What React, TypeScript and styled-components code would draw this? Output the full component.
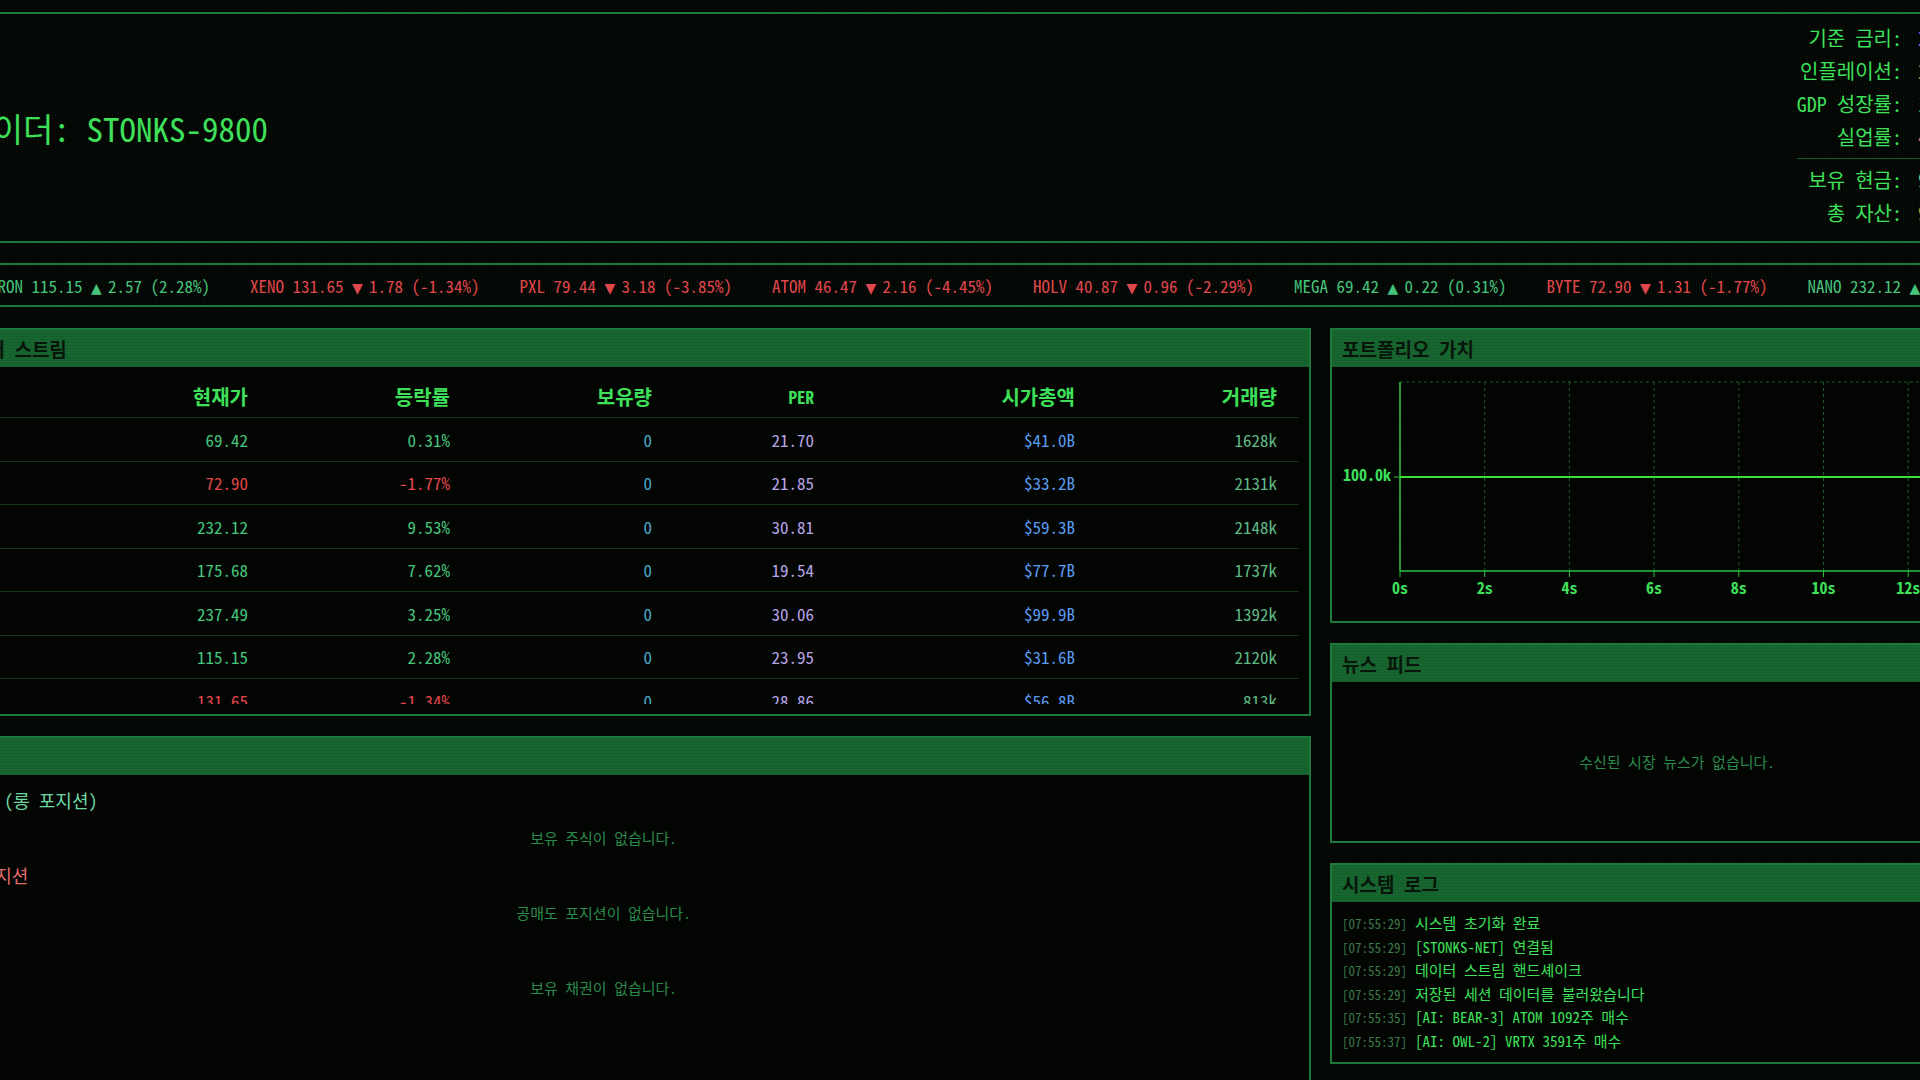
import React from "react";
import styled, { createGlobalStyle } from "styled-components";

const FONT = `"Noto Sans Mono CJK KR", "Noto Sans CJK KR", "DejaVu Sans Mono", monospace`;

const C = {
  bg: "#040604",
  border: "#1d7a3a",
  headerBg: "#17662f",
  bright: "#3ee05a",
  up: "#45c47c",
  down: "#e0474c",
  dim: "#2b8a4c",
  sep: "#0f3519",
};

const GlobalStyle = createGlobalStyle`
  html, body { margin: 0; padding: 0; background: ${C.bg}; overflow: hidden; }
  body { font-family: ${FONT}; color: ${C.bright}; }
  * { box-sizing: border-box; }
`;

const Page = styled.div`
  width: 2128px;
  margin-left: -104px;
  padding-top: 12px;
  display: flex;
  flex-direction: column;
  background-image: repeating-linear-gradient(90deg, rgba(40, 120, 60, 0.05) 0 1px, transparent 1px 3px);
`;

/* ---------- header ---------- */
const TopBar = styled.header`
  height: 231px;
  border: 2px solid ${C.border};
  display: flex;
  align-items: center;
  justify-content: space-between;
  padding: 0 40px 0 34px;
`;

const Title = styled.h1`
  margin: 0;
  font-family: ${FONT};
  font-size: 33px;
  font-weight: 400;
  color: ${C.bright};
`;

const Stats = styled.div`
  display: grid;
  grid-template-columns: auto 64px;
  column-gap: 16px;
  line-height: 33px;
  font-size: 20px;
  margin-bottom: 5px;
`;

const StatLabel = styled.span`
  text-align: right;
  color: ${C.bright};
`;

const StatValue = styled.span<{ $color: string }>`
  color: ${(p) => p.$color};
`;

const StatDivider = styled.div`
  grid-column: 1 / -1;
  height: 1px;
  background: #1d5a2e;
  margin: 5px 0 4px;
`;

/* ---------- ticker ---------- */
const Ticker = styled.div`
  margin-top: 20px;
  height: 44px;
  border-top: 2px solid ${C.border};
  border-bottom: 2px solid ${C.border};
  display: flex;
  align-items: center;
  gap: 40px;
  padding-left: 93px;
  overflow: hidden;
  white-space: nowrap;
  font-size: 17px;
`;

const TickerItem = styled.span<{ $up: boolean }>`
  color: ${(p) => (p.$up ? C.up : C.down)};
`;

const Arrow = styled.span`
  display: inline-block;
  width: 8.5px;
  text-align: center;
  font-family: "DejaVu Sans", sans-serif;
  font-size: 14px;
`;

/* ---------- layout ---------- */
const Main = styled.main`
  margin-top: 21px;
  display: grid;
  grid-template-columns: 1415px 694px;
  column-gap: 19px;
  align-items: start;
`;

const Column = styled.div`
  display: flex;
  flex-direction: column;
  gap: 20px;
`;

const Panel = styled.section<{ $h: number }>`
  height: ${(p) => p.$h}px;
  border: 2px solid ${C.border};
  display: flex;
  flex-direction: column;
  background: #030503;
`;

const PanelHeader = styled.h2`
  margin: 0;
  height: 37px;
  flex: none;
  line-height: 37px;
  padding-left: 10px;
  font-family: ${FONT};
  font-size: 19px;
  font-weight: 700;
  color: #07150b;
  background: ${C.headerBg}
    repeating-linear-gradient(0deg, rgba(0, 0, 0, 0.07) 0 1px, transparent 1px 3px);
`;

const PanelBody = styled.div`
  flex: 1;
  min-height: 0;
  position: relative;
`;

/* ---------- market table ---------- */
const MarketBody = styled(PanelBody)`
  padding: 8px 10px 10px 10px;
`;

const Scroller = styled.div`
  height: 329px;
  overflow-y: scroll;
  &::-webkit-scrollbar {
    width: 17px;
  }
  &::-webkit-scrollbar-track {
    background: #c6c6c6;
  }
  &::-webkit-scrollbar-thumb {
    background: #9a9a9a;
    border: 3px solid #c6c6c6;
    border-radius: 8px;
  }
`;

const COLS = "142px 198px 202px 202px 162px 261px 202px";

const HeadRow = styled.div`
  display: grid;
  grid-template-columns: ${COLS};
  height: 43px;
  align-items: center;
  border-bottom: 1px solid ${C.sep};
  font-size: 20px;
  font-weight: 700;
  color: ${C.bright};
`;

const Row = styled.div`
  display: grid;
  grid-template-columns: ${COLS};
  height: 43.5px;
  align-items: center;
  border-bottom: 1px solid ${C.sep};
  font-size: 17px;
`;

const Cell = styled.span<{ $color?: string; $left?: boolean; $small?: boolean }>`
  text-align: ${(p) => (p.$left ? "left" : "right")};
  color: ${(p) => p.$color || C.bright};
  font-size: ${(p) => (p.$small ? "17px" : "inherit")};
  white-space: nowrap;
`;

/* ---------- holdings ---------- */
const HoldBody = styled(PanelBody)`
  padding: 13px 22px;
  display: flex;
  flex-direction: column;
  gap: 15px;
`;

const HoldSection = styled.div`
  display: flex;
  flex-direction: column;
  gap: 15px;
`;

const HoldLabel = styled.div<{ $color: string }>`
  line-height: 24px;
  font-size: 18px;
  font-weight: 500;
  color: ${(p) => p.$color};
`;

const Empty = styled.div`
  line-height: 21px;
  font-size: 15px;
  text-align: center;
  color: ${C.dim};
`;

/* ---------- news ---------- */
const CenterBody = styled(PanelBody)`
  display: flex;
  align-items: center;
  justify-content: center;
  font-size: 15px;
  color: ${C.dim};
`;

/* ---------- log ---------- */
const LogBody = styled(PanelBody)`
  padding: 9px 10px;
`;

const LogLine = styled.div`
  display: flex;
  align-items: baseline;
  height: 23.5px;
  line-height: 23.5px;
  white-space: nowrap;
`;

const Stamp = styled.span`
  font-size: 13px;
  color: #3c7a4b;
  margin-right: 8px;
`;

const LogMsg = styled.span`
  font-size: 15px;
  color: ${C.bright};
`;

/* ---------- chart ---------- */
const ChartSvg = styled.svg`
  display: block;
  font-family: ${FONT};
`;

const PortfolioChart = () => {
  const x0 = 68;
  const step = 84.7;
  const top = 15;
  const bottom = 204;
  const ticks = Array.from({ length: 8 }, (_, i) => i);
  const xEnd = x0 + step * 7;
  return (
    <ChartSvg width="690" height="254" viewBox="0 0 690 254">
      <line x1={x0} y1={top} x2={xEnd} y2={top} stroke="#1b5a2b" strokeDasharray="3 3" />
      {ticks.map((i) => (
        <line
          key={"g" + i}
          x1={x0 + step * i}
          y1={top}
          x2={x0 + step * i}
          y2={bottom}
          stroke="#1b5a2b"
          strokeDasharray="3 3"
        />
      ))}
      <line x1={x0} y1={top} x2={x0} y2={bottom} stroke="#2fbf45" strokeWidth="1.5" />
      <line x1={x0} y1={bottom} x2={xEnd} y2={bottom} stroke="#2fbf45" strokeWidth="1.5" />
      {ticks.map((i) => (
        <g key={"t" + i}>
          <line x1={x0 + step * i} y1={bottom} x2={x0 + step * i} y2={bottom + 6} stroke="#2fbf45" />
          <text
            x={x0 + step * i}
            y={223}
            textAnchor="middle"
            dominantBaseline="middle"
            fontSize="16"
            fontWeight="700"
            fill={C.bright}
          >
            {i * 2}s
          </text>
        </g>
      ))}
      <line x1={x0 - 6} y1={110} x2={x0} y2={110} stroke="#2fbf45" />
      <text
        x={x0 - 9}
        y={110}
        textAnchor="end"
        dominantBaseline="middle"
        fontSize="16"
        fontWeight="700"
        fill={C.bright}
      >
        100.0k
      </text>
      <line x1={x0} y1={110} x2={xEnd} y2={110} stroke="#3ee03e" strokeWidth="2" />
    </ChartSvg>
  );
};

/* ---------- data ---------- */
const tickerData = [
  { s: "TRON", p: "115.15", up: true, d: "2.57", c: "2.28" },
  { s: "XENO", p: "131.65", up: false, d: "1.78", c: "-1.34" },
  { s: "PXL", p: "79.44", up: false, d: "3.18", c: "-3.85" },
  { s: "ATOM", p: "46.47", up: false, d: "2.16", c: "-4.45" },
  { s: "HOLV", p: "40.87", up: false, d: "0.96", c: "-2.29" },
  { s: "MEGA", p: "69.42", up: true, d: "0.22", c: "0.31" },
  { s: "BYTE", p: "72.90", up: false, d: "1.31", c: "-1.77" },
  { s: "NANO", p: "232.12", up: true, d: "20.19", c: "9.53" },
];

const rows = [
  ["MEGA", "69.42", "0.31", "21.70", "$41.0B", "1628k"],
  ["BYTE", "72.90", "-1.77", "21.85", "$33.2B", "2131k"],
  ["NANO", "232.12", "9.53", "30.81", "$59.3B", "2148k"],
  ["QBIT", "175.68", "7.62", "19.54", "$77.7B", "1737k"],
  ["VRTX", "237.49", "3.25", "30.06", "$99.9B", "1392k"],
  ["TRON", "115.15", "2.28", "23.95", "$31.6B", "2120k"],
  ["XENO", "131.65", "-1.34", "28.86", "$56.8B", "813k"],
  ["PXL", "79.44", "-3.85", "17.42", "$22.1B", "1544k"],
  ["ATOM", "46.47", "-4.45", "14.88", "$18.3B", "2410k"],
  ["HOLV", "40.87", "-2.29", "12.61", "$15.7B", "987k"],
  ["FLUX", "88.12", "1.05", "25.40", "$27.5B", "1210k"],
  ["CORE", "154.30", "-0.62", "22.18", "$64.2B", "1875k"],
  ["ZETA", "61.09", "4.11", "18.73", "$12.9B", "956k"],
  ["DATA", "98.77", "0.88", "27.35", "$45.6B", "1433k"],
  ["GRID", "143.25", "-2.02", "20.66", "$52.4B", "1690k"],
  ["SYNC", "57.66", "1.47", "16.92", "$9.8B", "744k"],
];

const logs = [
  ["07:55:29", "시스템 초기화 완료"],
  ["07:55:29", "[STONKS-NET] 연결됨"],
  ["07:55:29", "데이터 스트림 핸드셰이크"],
  ["07:55:29", "저장된 세션 데이터를 불러왔습니다"],
  ["07:55:35", "[AI: BEAR-3] ATOM 1092주 매수"],
  ["07:55:37", "[AI: OWL-2] VRTX 3591주 매수"],
];

export default function App() {
  return (
    <>
      <GlobalStyle />
      <Page>
        <TopBar>
          <Title>트레이더: STONKS-9800</Title>
          <Stats>
            <StatLabel>기준 금리:</StatLabel>
            <StatValue $color="#b07cf2">2.50%</StatValue>
            <StatLabel>인플레이션:</StatLabel>
            <StatValue $color="#e68a38">2.80%</StatValue>
            <StatLabel>GDP 성장률:</StatLabel>
            <StatValue $color="#3fc79a">1.90%</StatValue>
            <StatLabel>실업률:</StatLabel>
            <StatValue $color="#e05a5a">4.10%</StatValue>
            <StatDivider />
            <StatLabel>보유 현금:</StatLabel>
            <StatValue $color="#6fc98a">99,850</StatValue>
            <StatLabel>총 자산:</StatLabel>
            <StatValue $color="#e0a030">99,850</StatValue>
          </Stats>
        </TopBar>

        <Ticker>
          {tickerData.map((t) => (
            <TickerItem key={t.s} $up={t.up}>
              {t.s} {t.p} <Arrow>{t.up ? "▲" : "▼"}</Arrow> {t.d} ({t.c}%)
            </TickerItem>
          ))}
        </Ticker>

        <Main>
          <Column>
            <Panel $h={388}>
              <PanelHeader>시장 데이터 스트림</PanelHeader>
              <MarketBody>
                <Scroller>
                  <HeadRow>
                    <Cell $left>종목</Cell>
                    <Cell>현재가</Cell>
                    <Cell>등락률</Cell>
                    <Cell>보유량</Cell>
                    <Cell $small>PER</Cell>
                    <Cell>시가총액</Cell>
                    <Cell>거래량</Cell>
                  </HeadRow>
                  {rows.map((r) => {
                    const up = !r[2].startsWith("-");
                    const col = up ? C.up : C.down;
                    return (
                      <Row key={r[0]}>
                        <Cell $left>{r[0]}</Cell>
                        <Cell $color={col}>{r[1]}</Cell>
                        <Cell $color={col}>{r[2]}%</Cell>
                        <Cell $color="#4aa8c8">0</Cell>
                        <Cell $color="#b8a4e8">{r[3]}</Cell>
                        <Cell $color="#5b9bf0">{r[4]}</Cell>
                        <Cell $color="#5fb884">{r[5]}</Cell>
                      </Row>
                    );
                  })}
                </Scroller>
              </MarketBody>
            </Panel>

            <Panel $h={420}>
              <PanelHeader>보유 자산</PanelHeader>
              <HoldBody>
                <HoldSection>
                  <HoldLabel $color="#6fd8a0">보유 주식 (롱 포지션)</HoldLabel>
                  <Empty>보유 주식이 없습니다.</Empty>
                </HoldSection>
                <HoldSection>
                  <HoldLabel $color="#e06a6a">공매도 포지션</HoldLabel>
                  <Empty>공매도 포지션이 없습니다.</Empty>
                </HoldSection>
                <HoldSection>
                  <HoldLabel $color="#6aa8e0">채권</HoldLabel>
                  <Empty>보유 채권이 없습니다.</Empty>
                </HoldSection>
              </HoldBody>
            </Panel>
          </Column>

          <Column>
            <Panel $h={295}>
              <PanelHeader>포트폴리오 가치</PanelHeader>
              <PanelBody>
                <PortfolioChart />
              </PanelBody>
            </Panel>
            <Panel $h={200}>
              <PanelHeader>뉴스 피드</PanelHeader>
              <CenterBody>수신된 시장 뉴스가 없습니다.</CenterBody>
            </Panel>
            <Panel $h={201}>
              <PanelHeader>시스템 로그</PanelHeader>
              <LogBody>
                {logs.map((l, i) => (
                  <LogLine key={i}>
                    <Stamp>[{l[0]}]</Stamp>
                    <LogMsg>{l[1]}</LogMsg>
                  </LogLine>
                ))}
              </LogBody>
            </Panel>
          </Column>
        </Main>
      </Page>
    </>
  );
}
